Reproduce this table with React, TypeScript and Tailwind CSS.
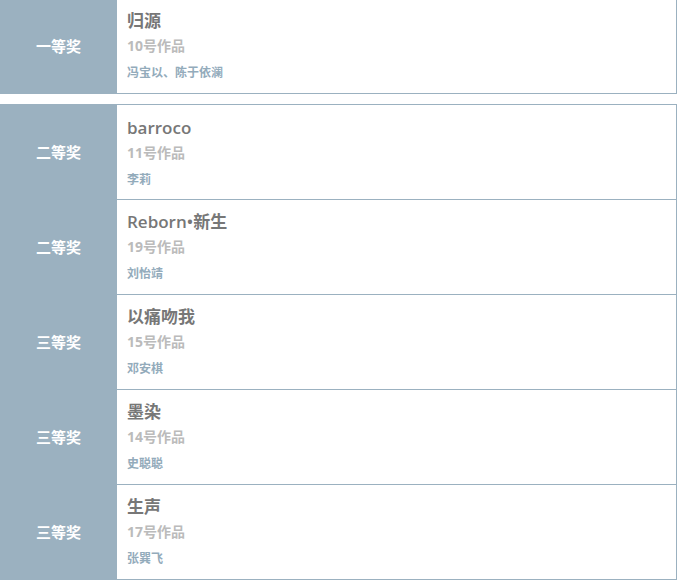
import * as React from 'react';

type Award = {
  prize: string;
  title: string;
  no: string;
  authors: string;
};

const top: Award[] = [{ prize: '一等奖', title: '归源', no: '10号作品', authors: '冯宝以、陈于依澜' }];

const rest: Award[] = [
  { prize: '二等奖', title: 'barroco', no: '11号作品', authors: '李莉' },
  { prize: '二等奖', title: 'Reborn•新生', no: '19号作品', authors: '刘怡靖' },
  { prize: '三等奖', title: '以痛吻我', no: '15号作品', authors: '邓安棋' },
  { prize: '三等奖', title: '墨染', no: '14号作品', authors: '史聪聪' },
  { prize: '三等奖', title: '生声', no: '17号作品', authors: '张巽飞' },
];

function Row({ item, first, topBorder }: { item: Award; first: boolean; topBorder: boolean }) {
  return (
    <div className="flex">
      <div className="w-[117px] shrink-0 bg-[#9bb1c0] flex items-center justify-center text-white font-bold text-[15px]">
        {item.prize}
      </div>
      <div
        className={
          'flex-1 h-[95px] border-r border-b border-[#9bb1c0] pl-[10px] pt-[10px] ' +
          (first && topBorder ? 'border-t h-[96px] pt-[11px]' : '')
        }
      >
        <div className="text-[17px] leading-6 font-semibold text-[#777777]">{item.title}</div>
        <div className="text-[14px] leading-[26px] font-bold text-[#bbbbbb]">{item.no}</div>
        <div className="text-[12px] leading-[27px] font-bold text-[#93abbb]">{item.authors}</div>
      </div>
    </div>
  );
}

export default function App() {
  return (
    <div className="w-[677px] bg-white font-['Open_Sans','Noto_Sans_CJK_SC',sans-serif]">
      <div className="-mt-px">
        {top.map((a, i) => (
          <Row key={i} item={a} first={i === 0} topBorder={false} />
        ))}
      </div>
      <div className="mt-[10px]">
        {rest.map((a, i) => (
          <Row key={i} item={a} first={i === 0} topBorder={true} />
        ))}
      </div>
    </div>
  );
}
